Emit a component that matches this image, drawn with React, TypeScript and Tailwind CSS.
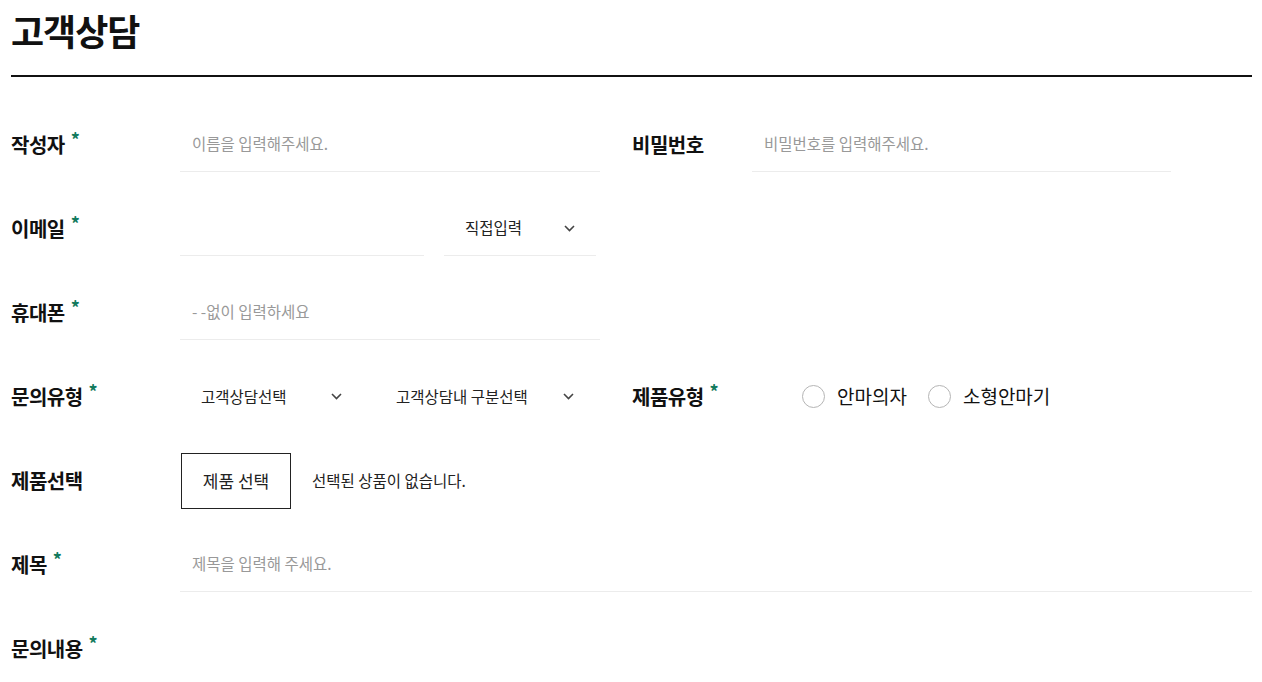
import React from "react";

const font = { fontFamily: '"Noto Sans CJK KR", "Noto Sans", sans-serif' };

function Star() {
  return <span className="ml-[6px] relative -top-[5px] text-[18px] font-bold text-[#127a5d]">*</span>;
}

function Label({ text, req }: { text: string; req?: boolean }) {
  return (
    <div className="flex items-center text-[20px] font-bold text-[#111] tracking-[-0.5px]">
      {text}
      {req && <Star />}
    </div>
  );
}

function Chevron() {
  return (
    <svg width="11" height="7" viewBox="0 0 11 7" fill="none">
      <path d="M1 1l4.5 4.5L10 1" stroke="#444" strokeWidth="1.6" />
    </svg>
  );
}

function TextInput({ ph, w }: { ph?: string; w: string }) {
  return (
    <div className={`${w} h-[55px] flex items-center border-b border-[#ececec] pl-[12px] text-[15.5px] text-[#999]`}>
      {ph}
    </div>
  );
}

function Select({ text, w, pl, gap }: { text: string; w: string; pl: string; gap: string }) {
  return (
    <div className={`${w} ${pl} ${gap} h-[55px] flex items-center justify-between text-[15.5px] text-[#222]`}>
      <span>{text}</span>
      <Chevron />
    </div>
  );
}

function Radio({ text }: { text: string }) {
  return (
    <label className="flex items-center gap-[12px] text-[19px] text-[#111]">
      <span className="w-[23px] h-[23px] rounded-full border border-[#b5b5b5] bg-white" />
      {text}
    </label>
  );
}

export default function App() {
  return (
    <div className="min-h-screen bg-white pl-[11px] pr-[10px]" style={font}>
      <h1 className="pt-[6px] text-[36px] font-bold leading-[48px] text-[#111] tracking-[-1px]">고객상담</h1>
      <div className="mt-[21px] h-[2px] bg-[#111]" />

      <div className="mt-[40px] flex flex-col gap-[29px]">
        {/* 작성자 / 비밀번호 */}
        <div className="flex items-center h-[55px]">
          <div className="w-[169px]"><Label text="작성자" req /></div>
          <TextInput ph="이름을 입력해주세요." w="w-[420px]" />
          <div className="w-[152px] pl-[32px]"><Label text="비밀번호" /></div>
          <TextInput ph="비밀번호를 입력해주세요." w="w-[419px]" />
        </div>

        {/* 이메일 */}
        <div className="flex items-center h-[55px]">
          <div className="w-[169px]"><Label text="이메일" req /></div>
          <TextInput w="w-[244px]" />
          <div className="ml-[20px] w-[152px] h-[55px] flex items-center justify-between border-b border-[#ececec] pl-[21px] pr-[21px] text-[15.5px] text-[#222]">
            <span>직접입력</span>
            <Chevron />
          </div>
        </div>

        {/* 휴대폰 */}
        <div className="flex items-center h-[55px]">
          <div className="w-[169px]"><Label text="휴대폰" req /></div>
          <TextInput ph="- -없이 입력하세요" w="w-[420px]" />
        </div>

        {/* 문의유형 / 제품유형 */}
        <div className="flex items-center h-[55px]">
          <div className="w-[169px]"><Label text="문의유형" req /></div>
          <Select text="고객상담선택" w="w-[171px]" pl="pl-[21px]" gap="pr-[9px]" />
          <div className="w-[24px]" />
          <Select text="고객상담내 구분선택" w="w-[216px]" pl="pl-[21px]" gap="pr-[17px]" />
          <div className="w-[211px] pl-[41px]"><Label text="제품유형" req /></div>
          <div className="flex items-center gap-[21px]">
            <Radio text="안마의자" />
            <Radio text="소형안마기" />
          </div>
        </div>

        {/* 제품선택 */}
        <div className="flex items-center h-[55px]">
          <div className="w-[170px]"><Label text="제품선택" /></div>
          <button className="w-[110px] h-[56px] border border-[#222] text-[17px] text-[#222] bg-white">제품 선택</button>
          <span className="ml-[21px] text-[15.5px] text-[#222]">선택된 상품이 없습니다.</span>
        </div>

        {/* 제목 */}
        <div className="flex items-center h-[55px]">
          <div className="w-[169px]"><Label text="제목" req /></div>
          <TextInput ph="제목을 입력해 주세요." w="flex-1" />
        </div>

        {/* 문의내용 */}
        <div className="flex items-center h-[55px]">
          <div className="w-[169px]"><Label text="문의내용" req /></div>
        </div>
      </div>
    </div>
  );
}
